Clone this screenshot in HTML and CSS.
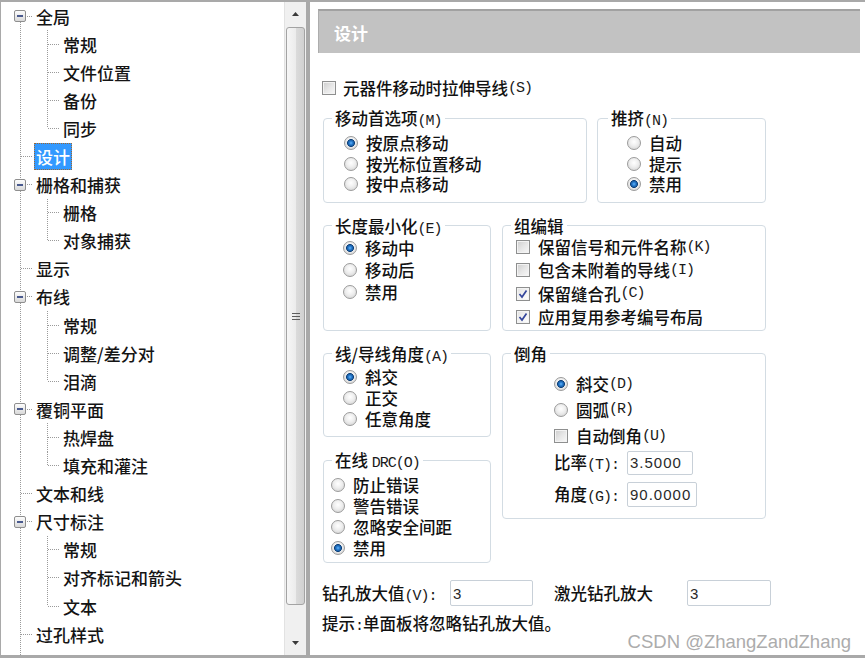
FILE: index.html
```html
<!DOCTYPE html>
<html lang="zh-CN">
<head>
<meta charset="utf-8">
<title>设计</title>
<link rel="stylesheet" href="styles.css">
</head>
<body>
<div class="window">
  <aside class="tree-panel">
    <ul class="tree">
      <li><span class="ind first"><span class="exp"></span></span><span class="label">全局</span></li>
      <li><span class="ind pass"></span><span class="ind tee"></span><span class="label">常规</span></li>
      <li><span class="ind pass"></span><span class="ind tee"></span><span class="label">文件位置</span></li>
      <li><span class="ind pass"></span><span class="ind tee"></span><span class="label">备份</span></li>
      <li><span class="ind pass"></span><span class="ind last"></span><span class="label">同步</span></li>
      <li><span class="ind tee"></span><span class="label sel">设计</span></li>
      <li><span class="ind tee"><span class="exp"></span></span><span class="label">栅格和捕获</span></li>
      <li><span class="ind pass"></span><span class="ind tee"></span><span class="label">栅格</span></li>
      <li><span class="ind pass"></span><span class="ind last"></span><span class="label">对象捕获</span></li>
      <li><span class="ind tee"></span><span class="label">显示</span></li>
      <li><span class="ind tee"><span class="exp"></span></span><span class="label">布线</span></li>
      <li><span class="ind pass"></span><span class="ind tee"></span><span class="label">常规</span></li>
      <li><span class="ind pass"></span><span class="ind tee"></span><span class="label">调整/差分对</span></li>
      <li><span class="ind pass"></span><span class="ind last"></span><span class="label">泪滴</span></li>
      <li><span class="ind tee"><span class="exp"></span></span><span class="label">覆铜平面</span></li>
      <li><span class="ind pass"></span><span class="ind tee"></span><span class="label">热焊盘</span></li>
      <li><span class="ind pass"></span><span class="ind last"></span><span class="label">填充和灌注</span></li>
      <li><span class="ind tee"></span><span class="label">文本和线</span></li>
      <li><span class="ind tee"><span class="exp"></span></span><span class="label">尺寸标注</span></li>
      <li><span class="ind pass"></span><span class="ind tee"></span><span class="label">常规</span></li>
      <li><span class="ind pass"></span><span class="ind tee"></span><span class="label">对齐标记和箭头</span></li>
      <li><span class="ind pass"></span><span class="ind last"></span><span class="label">文本</span></li>
      <li><span class="ind tee"></span><span class="label">过孔样式</span></li>
      <li><span class="ind tee"></span><span class="label">模具元器件</span></li>
    </ul>
    <div class="scrollbar">
      <div class="sb-btn"><svg width="7" height="4" viewBox="0 0 7 4"><polygon points="0,4 7,4 3.5,0" fill="#3a3a3a"/></svg></div>
      <div class="thumb"><div class="grip"></div></div>
      <div class="sb-track"></div>
      <div class="sb-btn"><svg width="7" height="4" viewBox="0 0 7 4"><polygon points="0,0 7,0 3.5,4" fill="#3a3a3a"/></svg></div>
    </div>
  </aside>

  <main class="main">
    <div class="header">设计</div>
    <div class="content">
      <div class="opt top-check"><span class="cb"></span>元器件移动时拉伸导线<span class="k">(S)</span></div>

      <div class="row1">
        <fieldset class="grp g-move">
          <legend>移动首选项<span class="k">(M)</span></legend>
          <div class="opt"><span class="rb on"></span>按原点移动</div>
          <div class="opt"><span class="rb"></span>按光标位置移动</div>
          <div class="opt"><span class="rb"></span>按中点移动</div>
        </fieldset>
        <fieldset class="grp g-push">
          <legend>推挤<span class="k">(N)</span></legend>
          <div class="opt"><span class="rb"></span>自动</div>
          <div class="opt"><span class="rb"></span>提示</div>
          <div class="opt"><span class="rb on"></span>禁用</div>
        </fieldset>
      </div>

      <div class="grid">
        <fieldset class="grp g-len">
          <legend>长度最小化<span class="k">(E)</span></legend>
          <div class="opt"><span class="rb on"></span>移动中</div>
          <div class="opt"><span class="rb"></span>移动后</div>
          <div class="opt"><span class="rb"></span>禁用</div>
        </fieldset>
        <fieldset class="grp g-edit">
          <legend>组编辑</legend>
          <div class="opt"><span class="cb"></span>保留信号和元件名称<span class="k">(K)</span></div>
          <div class="opt"><span class="cb"></span>包含未附着的导线<span class="k">(I)</span></div>
          <div class="opt"><span class="cb on"><svg width="10" height="10" viewBox="0 0 10 10"><polyline points="1.5,5 4,8 8.5,1.5" fill="none" stroke="#34469c" stroke-width="1.7"/></svg></span>保留缝合孔<span class="k">(C)</span></div>
          <div class="opt"><span class="cb on"><svg width="10" height="10" viewBox="0 0 10 10"><polyline points="1.5,5 4,8 8.5,1.5" fill="none" stroke="#34469c" stroke-width="1.7"/></svg></span>应用复用参考编号布局</div>
        </fieldset>

        <div class="col">
          <fieldset class="grp g-angle">
            <legend>线/导线角度<span class="k">(A)</span></legend>
            <div class="opt"><span class="rb on"></span>斜交</div>
            <div class="opt"><span class="rb"></span>正交</div>
            <div class="opt"><span class="rb"></span>任意角度</div>
          </fieldset>
          <fieldset class="grp g-drc">
            <legend>在线 <span class="k">DRC(O)</span></legend>
            <div class="opt"><span class="rb"></span>防止错误</div>
            <div class="opt"><span class="rb"></span>警告错误</div>
            <div class="opt"><span class="rb"></span>忽略安全间距</div>
            <div class="opt"><span class="rb on"></span>禁用</div>
          </fieldset>
        </div>

        <fieldset class="grp g-chamfer">
          <legend>倒角</legend>
          <div class="opt r1"><span class="rb on"></span>斜交<span class="k">(D)</span></div>
          <div class="opt r2"><span class="rb"></span>圆弧<span class="k">(R)</span></div>
          <div class="opt c1"><span class="cb"></span>自动倒角<span class="k">(U)</span></div>
          <div class="opt f1"><span class="flabel">比率<span class="k">(T):</span></span><input class="tb tb-ratio" type="text" value="3.5000" readonly></div>
          <div class="opt f2"><span class="flabel">角度<span class="k">(G):</span></span><input class="tb tb-angle" type="text" value="90.0000" readonly></div>
        </fieldset>
      </div>

      <div class="opt drill">
        <span class="lab1">钻孔放大值<span class="k">(V):</span></span>
        <input class="tb tb-drill" type="text" value="3" readonly>
        <span class="lab2">激光钻孔放大</span>
        <input class="tb tb-laser" type="text" value="3" readonly>
      </div>
      <div class="hint">提示<span class="k">:</span>单面板将忽略钻孔放大值。</div>
    </div>
  </main>
</div>
<div class="watermark">CSDN @ZhangZandZhang</div>
</body>
</html>
```

FILE: styles.css
```css
* { box-sizing: border-box; }

html, body {
  margin: 0;
  padding: 0;
}

body {
  width: 865px;
  height: 658px;
  overflow: hidden;
  position: relative;
  background: #a9a9a9;
  font-family: "Noto Sans CJK SC", "Noto Sans", sans-serif;
  color: #000;
  --v: repeating-linear-gradient(to bottom, #9a9a9a 0 1px, transparent 1px 2px);
  --h: repeating-linear-gradient(to right, #9a9a9a 0 1px, transparent 1px 2px);
}

.window {
  display: flex;
  height: 658px;
  padding: 2px 0 3px 1px;
  gap: 4px;
}

/* ---------- left tree ---------- */
.tree-panel {
  width: 305px;
  flex: none;
  display: flex;
  background: #fff;
}

.tree {
  flex: 1;
  min-width: 0;
  margin: 0;
  padding: 0 0 0 6px;
  list-style: none;
  overflow: hidden;
  font-size: 17px;
  font-weight: 500;
  color: #141414;
}

.tree li {
  display: flex;
  align-items: center;
  height: 28.1px;
  white-space: nowrap;
}

.ind {
  flex: none;
  width: 27px;
  align-self: stretch;
  display: flex;
  align-items: center;
  background-repeat: no-repeat;
}

.pass {
  background-image: var(--v);
  background-size: 1px 100%;
  background-position: 13px 0;
}

.tee {
  background-image: var(--v), var(--h);
  background-size: 1px 100%, 11px 1px;
  background-position: 13px 0, 14px 50%;
}

.last {
  background-image: var(--v), var(--h);
  background-size: 1px 50%, 11px 1px;
  background-position: 13px 0, 14px 50%;
}

.first {
  background-image: var(--v), var(--h);
  background-size: 1px 50%, 11px 1px;
  background-position: 13px 100%, 14px 50%;
}

.exp {
  width: 12px;
  height: 12px;
  margin-left: 7px;
  border: 1px solid #8f8f8f;
  border-radius: 2px;
  background: linear-gradient(#fdfdfd, #d9d9d9);
  display: flex;
  align-items: center;
  justify-content: center;
}

.exp::before {
  content: "";
  width: 6px;
  height: 2px;
  background: #4a5a8e;
}

.label {
  padding: 0 2px;
  height: 27px;
  line-height: 27px;
}

.label.sel {
  background: #3399ff;
  color: #fff;
  outline: 1px dotted #a0672e;
  outline-offset: -1px;
}

/* ---------- scrollbar ---------- */
.scrollbar {
  width: 22px;
  flex: none;
  background: #f0f0f0;
  border-left: 1px solid #e2e2e2;
  display: flex;
  flex-direction: column;
  align-items: center;
}

.sb-btn {
  flex: none;
  width: 100%;
  height: 24px;
  display: flex;
  align-items: center;
  justify-content: center;
}

.thumb {
  flex: none;
  width: 19px;
  height: 578px;
  margin-top: 1px;
  border: 1px solid #a3a3a3;
  border-radius: 3px;
  background: linear-gradient(to right, #f6f6f6 0%, #ececec 50%, #dadada 56%, #d1d1d1 100%);
  display: flex;
  align-items: center;
  justify-content: center;
}

.grip {
  width: 8px;
  height: 7px;
  background: repeating-linear-gradient(to bottom, #5e5e5e 0 1px, transparent 1px 3px);
}

.sb-track { flex: 1; }

/* ---------- right panel ---------- */
.main {
  flex: 1;
  min-width: 0;
  background: #fff;
  padding: 7px 5px 0 8px;
  display: flex;
  flex-direction: column;
}

.header {
  flex: none;
  height: 44px;
  background: #c2c2c2;
  border-top: 2px solid #a1a1a1;
  border-left: 1px solid #adadad;
  color: #fff;
  font-size: 17px;
  font-weight: 700;
  padding-left: 15px;
  display: flex;
  align-items: center;
}

.content {
  padding-left: 4px;
  font-size: 16.5px;
  font-weight: 500;
  color: #111;
}

.k {
  font-family: "Liberation Mono", monospace;
  font-size: 15px;
  letter-spacing: -1px;
  font-weight: 400;
  line-height: 1;
  color: #1a1a1a;
}

.opt {
  display: flex;
  align-items: center;
  white-space: nowrap;
  line-height: 20px;
}

.top-check {
  height: 20px;
  margin-top: 25px;
}

.top-check .cb { margin-right: 7px; }

.rb {
  flex: none;
  width: 14px;
  height: 14px;
  margin-right: 8px;
  border-radius: 50%;
  border: 1px solid #9b9b9b;
  background: radial-gradient(circle at 50% 40%, #ffffff 0%, #eeeeee 45%, #cdcdcd 100%);
}

.rb.on {
  background:
    radial-gradient(circle at 50% 50%, #68b6f7 0, #2c82d6 1.5px, #175a9f 3px, #0e3f77 3.6px, rgba(255,255,255,0) 4.3px),
    radial-gradient(circle at 50% 40%, #ffffff 0%, #eeeeee 45%, #cdcdcd 100%);
}

.cb {
  flex: none;
  width: 14px;
  height: 14px;
  margin-right: 8px;
  border: 1px solid #8e8f8f;
  background: linear-gradient(135deg, #cdcdcd 0%, #e6e6e6 50%, #f8f8f8 100%);
  box-shadow: inset 0 0 0 1px #f3f3f3;
  display: flex;
  align-items: center;
  justify-content: center;
}

.cb.on {
  background: linear-gradient(135deg, #e2e2e2 0%, #f2f2f2 50%, #ffffff 100%);
}

/* group boxes */
.grp {
  margin: 0;
  padding: 0;
  min-width: 0;
  border: 1px solid #d3dce3;
  border-radius: 4px;
}

.grp legend {
  display: block;
  height: 20px;
  padding: 0 3px;
  margin-left: 8px;
  line-height: 20px;
  white-space: nowrap;
}

.row1 {
  display: flex;
  gap: 10px;
  margin-top: 10px;
  padding-left: 1px;
}

.g-move { width: 264px; padding: 5px 0 7px; }
.g-move .opt { height: 20.5px; padding-left: 20px; }

.g-push { width: 169px; padding: 5px 0 7px; }
.g-push legend { margin-left: 10px; }
.g-push .opt { height: 20.5px; padding-left: 29px; }

.grid {
  display: grid;
  grid-template-columns: 168px 264px;
  column-gap: 11px;
  row-gap: 13px;
  margin-top: 13px;
  padding-left: 1px;
}

.g-len { padding: 1px 0 0; }
.g-len .opt { height: 22px; padding-left: 19px; }

.g-edit { padding: 0 0 1px; }
.g-edit .opt { height: 23.3px; padding-left: 13px; }

.col {
  display: flex;
  flex-direction: column;
  gap: 13px;
}

.g-angle { padding: 3.3px 0 7px; }
.g-angle .opt { height: 20.8px; padding-left: 19px; }

.g-drc { padding: 4.5px 0 3.5px; }
.g-drc .opt { height: 21px; padding-left: 7px; }

.g-chamfer {
  align-self: start;
  padding: 8px 0 10px;
}
.g-chamfer .opt { padding-left: 51px; }
.g-chamfer .r1 { height: 25px; }
.g-chamfer .r2 { height: 26px; }
.g-chamfer .c1 { height: 27px; }
.g-chamfer .f1 { height: 26px; }
.g-chamfer .f2 { height: 26px; margin-top: 6px; }

.flabel { width: 73px; flex: none; }

.tb {
  flex: none;
  margin: 0;
  border: 1px solid #c8d0d8;
  border-radius: 2px;
  background: #fff;
  padding: 0 0 0 2px;
  font-family: "Liberation Sans", Arial, sans-serif;
  font-size: 15px;
  letter-spacing: 1px;
  color: #2a2a2a;
  outline: none;
}

.tb-ratio { width: 66px; height: 24px; }
.tb-angle { width: 70px; height: 25px; }

.drill {
  height: 26px;
  margin-top: 17px;
}

.lab1 { width: 128px; flex: none; }
.tb-drill { width: 83px; height: 26px; }
.lab2 { width: 133px; flex: none; margin-left: 21px; }
.tb-laser { width: 84px; height: 26px; }

.hint {
  margin-top: 7px;
  height: 21px;
  line-height: 21px;
  white-space: nowrap;
}

.watermark {
  position: absolute;
  right: 14px;
  top: 630px;
  font-family: "Liberation Sans", Arial, sans-serif;
  font-size: 18.5px;
  line-height: 24px;
  color: #acacac;
  white-space: nowrap;
}
```
